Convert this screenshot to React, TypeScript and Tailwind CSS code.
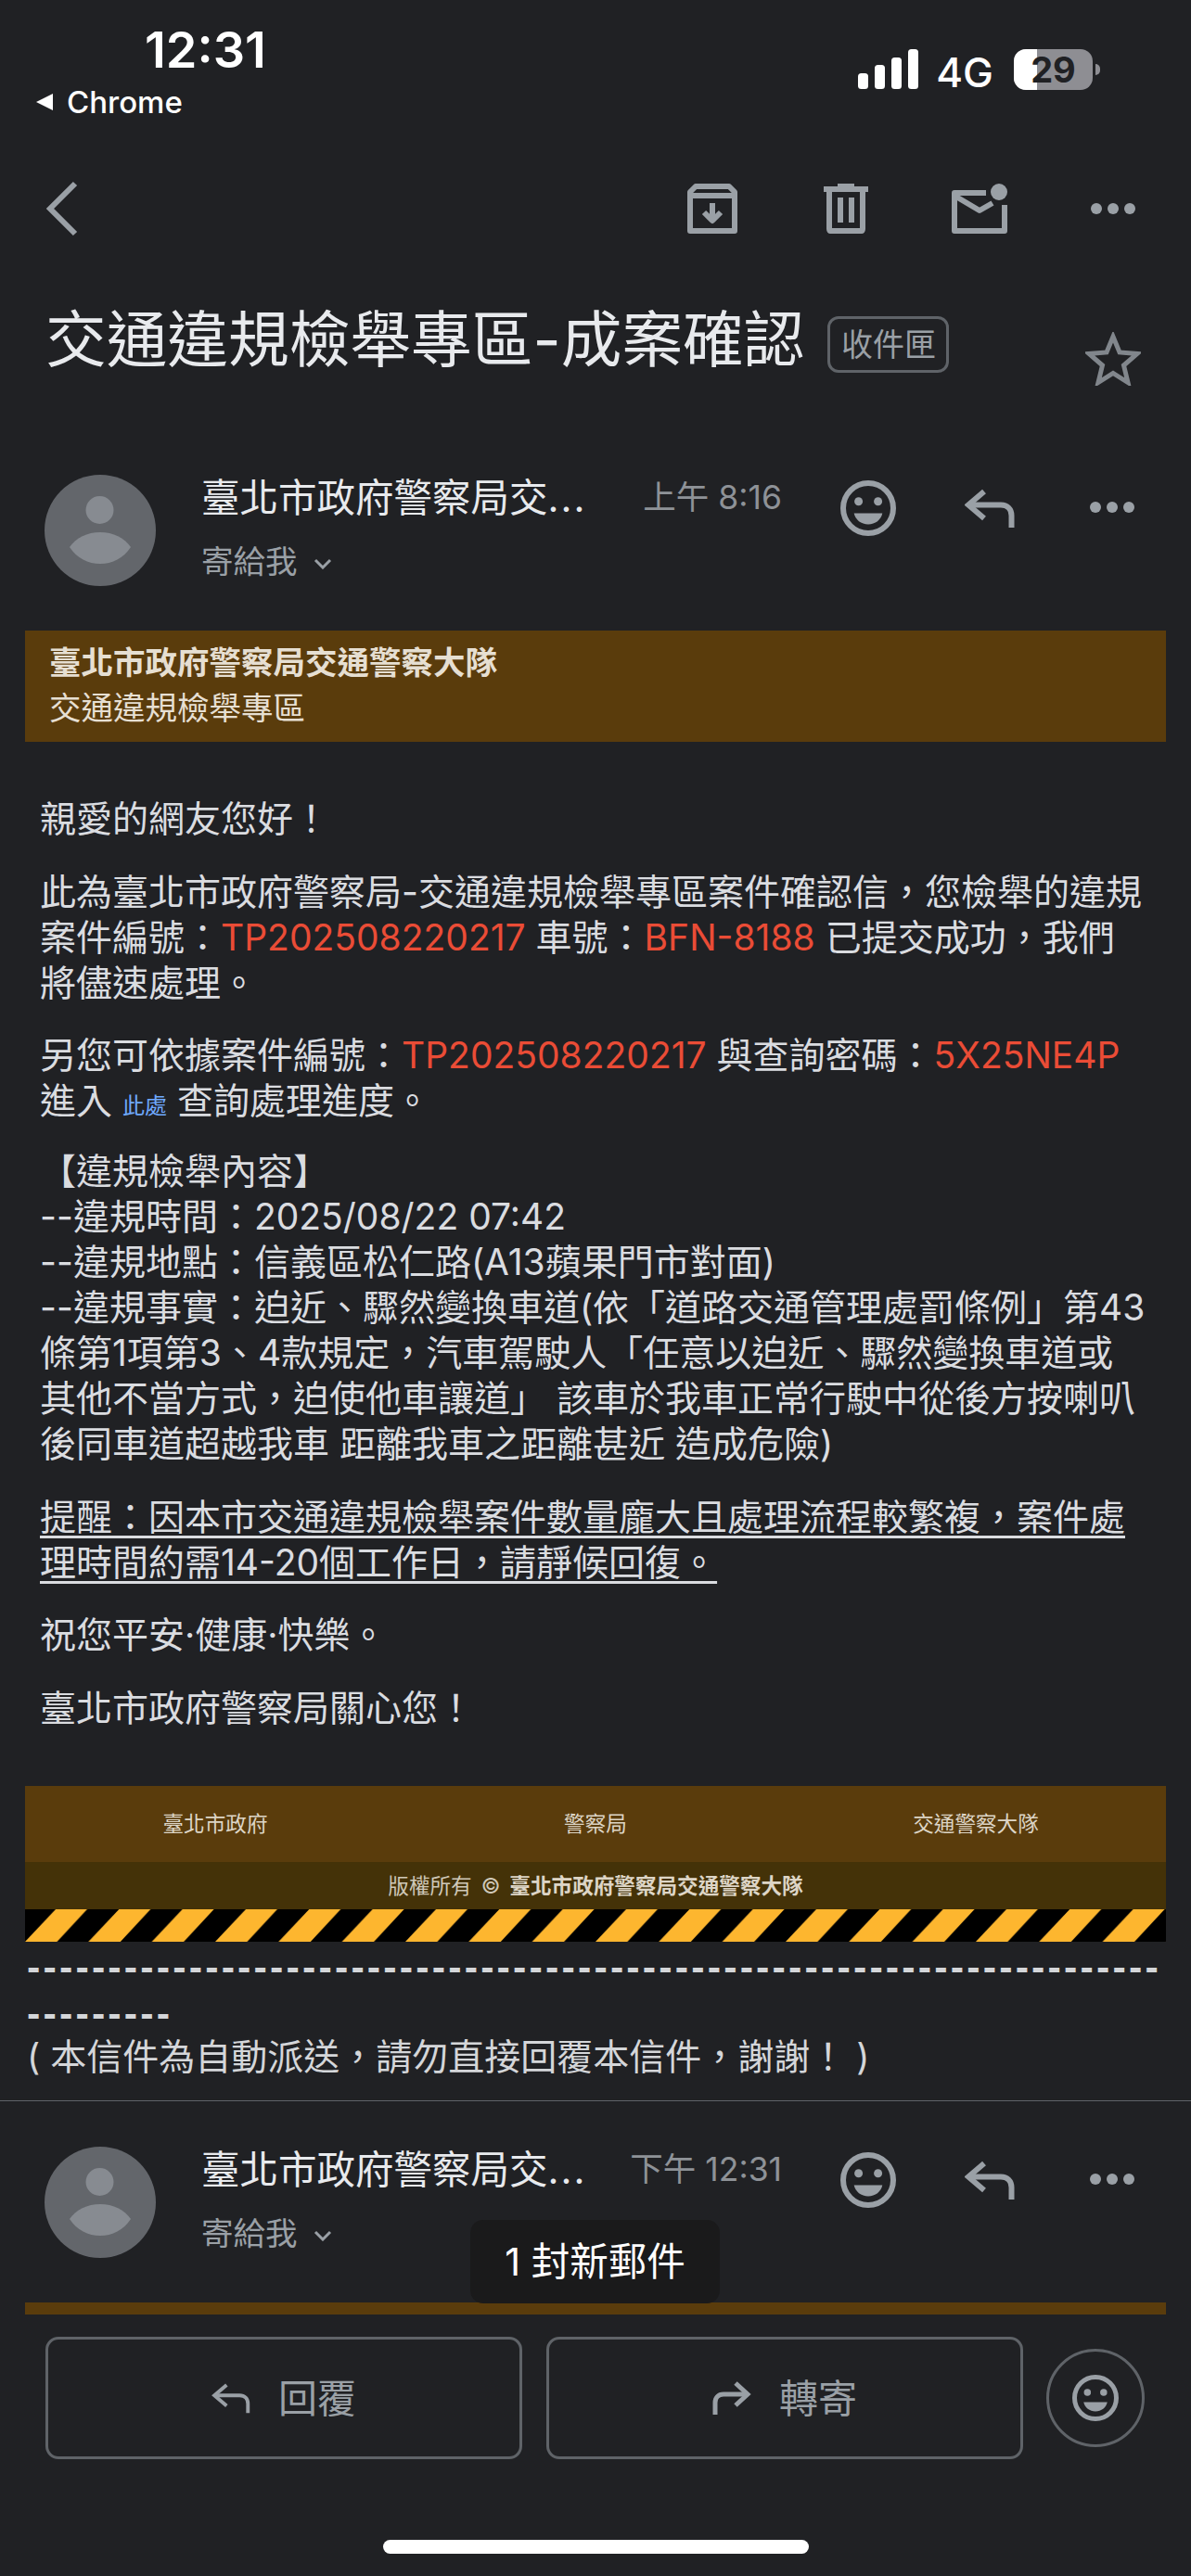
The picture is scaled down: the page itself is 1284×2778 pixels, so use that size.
import React from "react";

const G = "#9aa0a6";

function Dots() {
  return (
    <svg width="48" height="12" viewBox="0 0 48 12" fill={G} className="shrink-0">
      <circle cx="6" cy="6" r="6" />
      <circle cx="24" cy="6" r="6" />
      <circle cx="42" cy="6" r="6" />
    </svg>
  );
}

function Smiley({ size = 60 }: { size?: number }) {
  return (
    <svg width={size} height={size} viewBox="0 0 60 60" className="shrink-0">
      <circle cx="30" cy="30" r="27" fill="none" stroke={G} strokeWidth="6" />
      <circle cx="19.6" cy="22.7" r="4.5" fill={G} />
      <circle cx="40.6" cy="22.7" r="4.5" fill={G} />
      <path d="M14.7 35.5H45.3C44 42.5 37.5 47.5 30 47.5S16 42.5 14.7 35.5Z" fill={G} />
    </svg>
  );
}

function Reply({ w = 54, h = 42, sw = 6 }: { w?: number; h?: number; sw?: number }) {
  return (
    <svg width={w} height={h} viewBox="0 0 54 42" fill="none" stroke={G} strokeWidth={sw} className="shrink-0">
      <path d="M21 3L4 17.5L21 32" />
      <path d="M4 17.5H39C46 17.5 50.5 22 50.5 29V42" />
    </svg>
  );
}

function Forward() {
  return (
    <svg width="42" height="36" viewBox="0 0 42 36" fill="none" stroke={G} strokeWidth="5" className="shrink-0">
      <path d="M25 2L38 14L25 26" />
      <path d="M38 14H12C6 14 3 18 3 23V36" />
    </svg>
  );
}

function Avatar() {
  return (
    <svg width="120" height="120" viewBox="0 0 120 120" className="shrink-0">
      <circle cx="60" cy="60" r="60" fill="#63666b" />
      <circle cx="59.5" cy="38" r="15" fill="#878b91" />
      <path d="M27 78C34 68 46 62 60 62S86 68 93 78C85 90 73 96 60 96S35 90 27 78Z" fill="#878b91" />
    </svg>
  );
}

function MessageHeader({ time }: { time: string }) {
  return (
    <div className="flex items-start pl-[48px] h-[120px]">
      <Avatar />
      <div className="ml-[49px] w-[413px]">
        <div className="h-[50px] text-[41.5px] leading-[50px] text-[#e8eaed] whitespace-nowrap">
          臺北市政府警察局交<span className="tracking-[2px]">...</span>
        </div>
        <div className="mt-[19px] h-[50px] flex items-center text-[#9aa0a6]">
          <span className="text-[34.5px] leading-[50px]">寄給我</span>
          <svg width="20" height="12" viewBox="0 0 20 12" fill="none" stroke="#9aa0a6" strokeWidth="3" className="ml-[17px] mt-[4px]">
            <path d="M2 2L10 10L18 2" />
          </svg>
        </div>
      </div>
      <div className="w-[213px] mt-[2px] text-right text-[35.5px] leading-[46px] text-[#8e9297] whitespace-nowrap">{time}</div>
      <div className="ml-[63px] mt-[6px]">
        <Smiley />
      </div>
      <div className="ml-[74px] mt-[15px]">
        <Reply />
      </div>
      <div className="ml-[81px] mt-[29px]">
        <Dots />
      </div>
    </div>
  );
}

const Red = ({ children }: { children: React.ReactNode }) => <span className="text-[#ea4c36]">{children}</span>;
const Line = ({ children }: { children: React.ReactNode }) => <div className="h-[49px]">{children}</div>;

export default function App() {
  return (
    <div className="relative w-[1284px] h-[2778px] overflow-hidden bg-[#202124] font-['Inter','Noto_Sans_CJK_TC',sans-serif]">
      {/* status bar */}
      <div className="flex justify-between h-[154px]">
        <div className="pl-[38px] pt-[24px]">
          <div className="ml-[118px] text-[54px] leading-[60px] font-semibold text-white">12:31</div>
          <div className="mt-[6px] flex items-center text-white">
            <svg width="20" height="20" viewBox="0 0 20 20" fill="#fff"><path d="M19 1V19L1 10Z" /></svg>
            <span className="ml-[14px] text-[33px] leading-[40px] font-medium">Chrome</span>
          </div>
        </div>
        <div className="flex items-start pt-[53px] pr-[98px]">
          <svg width="65" height="43" viewBox="0 0 65 43" fill="#fff">
            <rect x="0" y="26" width="11" height="17" rx="3.5" />
            <rect x="18" y="17" width="11" height="26" rx="3.5" />
            <rect x="36" y="9" width="11" height="34" rx="3.5" />
            <rect x="54" y="0" width="11" height="43" rx="3.5" />
          </svg>
          <span className="ml-[19px] text-[44px] leading-[44px] text-white font-medium mt-[3px]">4G</span>
          <div className="relative ml-[22px] w-[85px] h-[44px] rounded-[13px] bg-[#8e8e93] overflow-hidden flex items-center justify-center">
            <div className="absolute left-0 top-0 bottom-0 w-[25px] bg-white" />
            <span className="relative text-[38px] leading-[44px] font-bold text-[#202124]">29</span>
          </div>
          <div className="ml-[3px] mt-[16px] w-[5px] h-[12px] rounded-r-full bg-[#8e8e93]" />
        </div>
      </div>

      {/* toolbar */}
      <div className="mt-[36px] h-[70px] flex items-center pl-[49px] pr-[60px]">
        <svg width="36" height="60" viewBox="0 0 36 60" fill="none" stroke={G} strokeWidth="6">
          <path d="M32 3L5 30L32 57" />
        </svg>
        <div className="ml-auto flex items-center">
          <svg width="54" height="54" viewBox="0 0 54 54" fill="none" stroke={G} strokeWidth="6" strokeLinejoin="round">
            <path d="M3 9L9 3H45L51 9V51H3Z" />
            <path d="M3 13H51" />
            <path d="M27 21V39" />
            <path d="M18 31L27 40L36 31" />
          </svg>
          <svg width="48" height="54" viewBox="0 0 48 54" fill={G} className="ml-[93px]">
            <rect x="0" y="3" width="48" height="6" />
            <rect x="15" y="0" width="18" height="4" />
            <path d="M3 9H45V49C45 52 43 54 41 54H7C5 54 3 52 3 49ZM9 9V48H39V9Z" fillRule="evenodd" />
            <rect x="15" y="15" width="6" height="27" />
            <rect x="27" y="15" width="6" height="27" />
          </svg>
          <svg width="60" height="54" viewBox="0 0 60 54" fill="none" stroke={G} strokeWidth="6" strokeLinejoin="round" className="ml-[90px]">
            <path d="M37 10H3V51H57V23" />
            <path d="M3 13L30 29L44 21" />
            <circle cx="51" cy="9" r="9" fill={G} stroke="none" />
          </svg>
          <div className="ml-[90px]">
            <Dots />
          </div>
        </div>
      </div>

      {/* title */}
      <div className="mt-[70px] h-[70px] flex items-start pl-[49px]">
        <h1 className="text-[65.7px] leading-[72px] font-normal text-[#e8eaed] whitespace-nowrap h-[72px]">交通違規檢舉專區-成案確認</h1>
        <div className="ml-[25px] mt-[11px] w-[131px] h-[61px] rounded-[12px] border-[3px] border-[#5f6368] flex items-center justify-center text-[34px] text-[#9aa0a6] whitespace-nowrap">收件匣</div>
        <svg width="60" height="58" viewBox="0 0 60 58" fill="none" stroke={G} strokeWidth="5" className="ml-auto mr-[54px] mt-[28px] opacity-80">
          <path d="M30 5L37 22L56 23.5L41.5 36L46 54.5L30 44.5L14 54.5L18.5 36L4 23.5L23 22Z" />
        </svg>
      </div>

      {/* first message */}
      <div className="mt-[112px]">
        <MessageHeader time="上午 8:16" />
      </div>

      <div className="mt-[48px] mx-[27px] h-[120px] bg-[#5a3c0c] pl-[26px] pt-[10px] text-[34.5px] leading-[49px] text-[#e6dfd2]">
        <Line><b className="font-bold">臺北市政府警察局交通警察大隊</b></Line>
        <Line>交通違規檢舉專區</Line>
      </div>

      <div className="mt-[58px] pl-[43px] text-[39px] leading-[49px] text-[#dadce0] whitespace-nowrap">
        <Line>親愛的網友您好！</Line>
        <div className="mt-[30px]">
          <Line>此為臺北市政府警察局-交通違規檢舉專區案件確認信，您檢舉的違規</Line>
          <Line>案件編號：<Red>TP202508220217</Red> 車號：<Red>BFN-8188</Red> 已提交成功，我們</Line>
          <Line>將儘速處理。</Line>
        </div>
        <div className="mt-[29px]">
          <Line>另您可依據案件編號：<Red>TP202508220217</Red> 與查詢密碼：<Red>5X25NE4P</Red></Line>
          <Line>進入 <span className="text-[24px] text-[#6ea8fe]">此處</span> 查詢處理進度。</Line>
        </div>
        <div className="mt-[27px]">
          <Line>【違規檢舉內容】</Line>
          <Line>--違規時間：2025/08/22 07:42</Line>
          <Line>--違規地點：信義區松仁路(A13蘋果門市對面)</Line>
          <Line>--違規事實：迫近、驟然變換車道(依「道路交通管理處罰條例」第43</Line>
          <Line>條第1項第3、4款規定，汽車駕駛人「任意以迫近、驟然變換車道或</Line>
          <Line>其他不當方式，迫使他車讓道」 該車於我車正常行駛中從後方按喇叭</Line>
          <Line>後同車道超越我車 距離我車之距離甚近 造成危險)</Line>
        </div>
        <div className="mt-[30px] underline underline-offset-[6px]">
          <Line>提醒：因本市交通違規檢舉案件數量龐大且處理流程較繁複，案件處</Line>
          <Line>理時間約需14-20個工作日，請靜候回復。</Line>
        </div>
        <div className="mt-[29px]">
          <Line>祝您平安·健康·快樂。</Line>
        </div>
        <div className="mt-[30px]">
          <Line>臺北市政府警察局關心您！</Line>
        </div>
      </div>

      {/* footer */}
      <div className="mt-[60px] mx-[27px]">
        <div className="h-[82px] bg-[#5a3c0c] grid grid-cols-3 items-center text-center text-[22.6px] text-[#ddd5c6]">
          <span>臺北市政府</span>
          <span>警察局</span>
          <span>交通警察大隊</span>
        </div>
        <div className="h-[51px] bg-[#443208] flex items-center justify-center text-[22.6px] text-[#cfc8b8]">
          版權所有<span className="mx-[10px]">©</span><b className="font-bold text-[#ddd5c6]">臺北市政府警察局交通警察大隊</b>
        </div>
        <svg width="1230" height="35" className="block bg-black">
          <defs>
            <pattern id="hazard" x="0" y="0" width="68.33" height="35" patternUnits="userSpaceOnUse">
              <path d="M0 35L33 0H67L34.5 35Z" fill="#fdb62f" />
            </pattern>
          </defs>
          <rect width="1230" height="35" fill="url(#hazard)" />
        </svg>
      </div>

      <div className="pl-[29px] text-[#d4d6d9] text-[39px] whitespace-nowrap">
        <div className="mt-[2px] h-[50px] text-[43px] leading-[50px] font-bold font-['Liberation_Sans'] tracking-[3.15px]">----------------------------------------------------------------------</div>
        <div className="h-[50px] text-[43px] leading-[50px] font-bold font-['Liberation_Sans'] tracking-[3.15px]">---------</div>
        <div className="h-[44px] leading-[44px]">( 本信件為自動派送，請勿直接回覆本信件，謝謝！ )</div>
      </div>

      <div className="mt-[25px] h-[1px] bg-[#5f6368]" />

      {/* second message */}
      <div className="mt-[49px]">
        <MessageHeader time="下午 12:31" />
      </div>
      <div className="mt-[48px] mx-[27px] h-[13px] bg-[#5a3c0c]" />

      {/* toast */}
      <div className="absolute left-[507px] top-[2394px] w-[269px] h-[90px] rounded-[14px] bg-[#1a1a1b] flex items-center justify-center text-[41.5px] text-white whitespace-nowrap">
        1 封新郵件
      </div>

      {/* actions */}
      <div className="mt-[24px] pl-[49px] flex items-center">
        <button className="w-[514px] h-[132px] rounded-[14px] border-[3px] border-[#5f6368] flex items-center justify-center text-[42px] text-[#9aa0a6]">
          <Reply w={42} h={36} sw={5} />
          <span className="ml-[30px]">回覆</span>
        </button>
        <button className="ml-[26px] w-[514px] h-[132px] rounded-[14px] border-[3px] border-[#5f6368] flex items-center justify-center text-[42px] text-[#9aa0a6]">
          <Forward />
          <span className="ml-[30px]">轉寄</span>
        </button>
        <div className="ml-[25px] w-[106px] h-[106px] rounded-full border-[3px] border-[#5f6368] flex items-center justify-center">
          <Smiley size={50} />
        </div>
      </div>

      <div className="mt-[87px] mx-auto w-[459px] h-[15px] rounded-full bg-white" />
    </div>
  );
}
